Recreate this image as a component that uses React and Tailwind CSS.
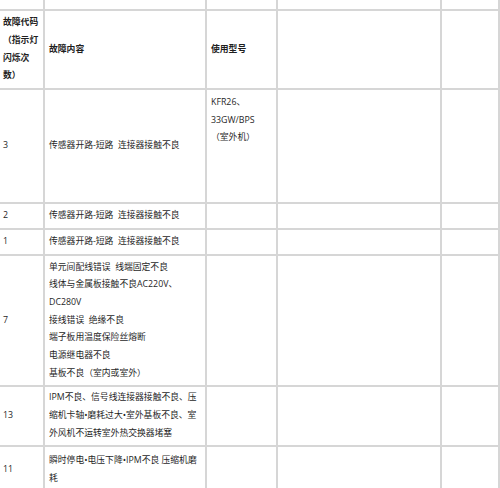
const rows = [
  { h: 'h-[11px]', code: [], content: [], model: [] },
  {
    h: 'h-[79px]',
    head: true,
    code: ['故障代码', '（指示灯', '闪烁次', '数）'],
    content: ['故障内容'],
    model: ['使用型号'],
  },
  {
    h: 'h-[114px]',
    code: ['3'],
    content: ['传感器开路-短路  连接器接触不良'],
    model: ['KFR26、', '33GW/BPS', '（室外机）'],
  },
  { h: 'h-[26px]', code: ['2'], content: ['传感器开路-短路  连接器接触不良'], model: [] },
  { h: 'h-[26px]', code: ['1'], content: ['传感器开路-短路  连接器接触不良'], model: [] },
  {
    h: 'h-[131px]',
    code: ['7'],
    content: [
      '单元间配线错误  线端固定不良',
      '线体与金属板接触不良AC220V、',
      'DC280V',
      '接线错误  绝缘不良',
      '端子板用温度保险丝熔断',
      '电源继电器不良',
      '基板不良（室内或室外）',
    ],
    model: [],
  },
  {
    h: 'h-[60px]',
    code: ['13'],
    content: [
      'IPM不良、信号线连接器接触不良、压',
      '缩机卡轴•磨耗过大•室外基板不良、室',
      '外风机不运转室外热交换器堵塞',
    ],
    model: [],
  },
  {
    h: 'h-[47px]',
    code: ['11'],
    content: ['瞬时停电•电压下降•IPM不良 压缩机磨', '耗'],
    model: [],
  },
];

function Lines({ items }) {
  return items.map((t, i) => (
    <div key={i} className="whitespace-pre">
      {t}
    </div>
  ));
}

export default function App() {
  return (
    <div className="w-[500px] h-[488px] overflow-hidden bg-white">
      <table
        className="table-fixed border-separate border-spacing-0 w-[500px] text-[8.8px] leading-[17.7px] text-[#1f1f1f]"
        style={{ fontFamily: '"Open Sans", "Noto Sans CJK SC", sans-serif' }}
      >
        <tbody>
          {rows.map((r, i) => {
            const cell = `${r.h} border-b-2 border-r-2 border-[#d6d6d6] align-middle ${r.head ? 'font-bold' : ''} ${i === 0 ? 'py-0' : 'py-[2px]'}`;
            return (
              <tr key={i}>
                <td className={`${cell} w-[45px] pl-[3px] pr-[2px]`}>
                  <Lines items={r.code} />
                </td>
                <td className={`${cell} w-[162px] px-[4px]`}>
                  <Lines items={r.content} />
                </td>
                <td
                  className={`${r.h} w-[71px] px-[4px] border-b-2 border-r-2 border-[#d6d6d6] ${
                    r.head ? 'font-bold align-middle py-[2px]' : i === 0 ? 'py-0' : 'align-top pt-[4px]'
                  }`}
                >
                  <Lines items={r.model} />
                </td>
                <td className={`${cell} w-[164px]`} />
                <td className={`${cell} w-[58px]`} />
              </tr>
            );
          })}
        </tbody>
      </table>
    </div>
  );
}
